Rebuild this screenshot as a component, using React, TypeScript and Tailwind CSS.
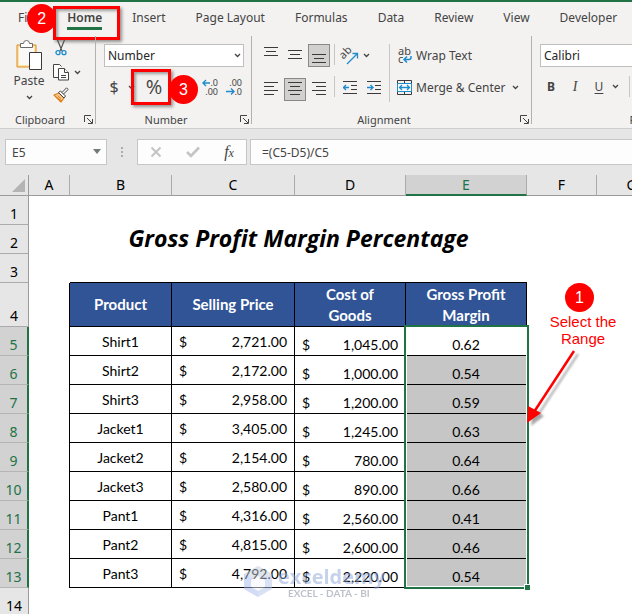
import type { ReactNode } from 'react';
import clsx from 'clsx';

const TABS = ['File', 'Home', 'Insert', 'Page Layout', 'Formulas', 'Data', 'Review', 'View', 'Developer'];

const COLUMNS = ['A', 'B', 'C', 'D', 'E', 'F', 'G'];

const PRODUCTS = [
  { name: 'Shirt1', price: '2,721.00', cost: '1,045.00', margin: '0.62' },
  { name: 'Shirt2', price: '2,172.00', cost: '1,000.00', margin: '0.54' },
  { name: 'Shirt3', price: '2,958.00', cost: '1,200.00', margin: '0.59' },
  { name: 'Jacket1', price: '3,405.00', cost: '1,245.00', margin: '0.63' },
  { name: 'Jacket2', price: '2,154.00', cost: '780.00', margin: '0.64' },
  { name: 'Jacket3', price: '2,580.00', cost: '890.00', margin: '0.66' },
  { name: 'Pant1', price: '4,316.00', cost: '2,560.00', margin: '0.41' },
  { name: 'Pant2', price: '4,815.00', cost: '2,600.00', margin: '0.46' },
  { name: 'Pant3', price: '4,792.00', cost: '2,220.00', margin: '0.54' },
];

export default function App() {
  return (
    <div className="flex h-screen flex-col overflow-hidden bg-white font-['Noto_Sans','Open_Sans',sans-serif] text-xs text-[#444444]">
      <header className="shrink-0 border-t-2 border-b border-t-[#217346] border-b-[#d0cecc] bg-[#f3f2f1]">
        <TabBar />
        <Ribbon />
      </header>
      <FormulaBar />
      <Sheet />
    </div>
  );
}

function TabBar() {
  return (
    <nav className="flex h-[34px] items-start gap-[30px] pt-1.5 pl-[18px]">
      {TABS.map((tab) => {
        const active = tab === 'Home';
        return (
          <button
            key={tab}
            type="button"
            className={clsx('relative shrink-0 leading-5 whitespace-nowrap', active && 'font-semibold')}
          >
            {tab}
            {active && (
              <>
                <span className="absolute inset-x-0 top-[19px] h-[3px] bg-[#217346]" />
                <Highlight className="-top-0.5 -right-[18px] -left-3.5 h-[34px]" />
                <Step n={2} className="-top-1 -left-10" />
              </>
            )}
          </button>
        );
      })}
    </nav>
  );
}

function Ribbon() {
  return (
    <div className="flex h-[92px] overflow-x-clip">
      <Group label="Clipboard" className="w-24" labelClass="pr-4">
        <div className="flex gap-1 pt-1 pl-3">
          <button type="button" className="flex w-[34px] flex-col items-center">
            <PasteIcon />
            <span className="leading-5">Paste</span>
            <Chevron className="mt-1" />
          </button>
          <div className="flex flex-col">
            <button type="button" aria-label="Cut" className="flex h-[21px] w-[22px] justify-center">
              <CutIcon />
            </button>
            <button type="button" aria-label="Copy" className="flex h-[23px] items-center">
              <CopyIcon />
              <Chevron className="ml-1" />
            </button>
            <button type="button" aria-label="Format Painter" className="flex h-[22px] w-[22px] items-center justify-center">
              <BrushIcon />
            </button>
          </div>
        </div>
      </Group>

      <Group label="Number" className="w-[156px]" labelClass="pr-4">
        <div className="flex flex-col gap-2 px-2 pt-2">
          <Combo label="Number format" value="Number" />
          <div className="flex h-6 items-center">
            <button type="button" aria-label="Accounting format" className="w-5 text-base leading-6">
              $
            </button>
            <Chevron className="-mr-1 ml-1" />
            <button
              type="button"
              aria-label="Percent style"
              className="relative w-10 pl-1.5 font-['Open_Sans',sans-serif] text-xl leading-6"
            >
              %
              <Highlight className="-top-1.5 right-0 -bottom-1.5 left-0" />
              <Step n={3} className="top-0 left-[38px]" />
            </button>
            <span className="flex-1" />
            <button type="button" aria-label="Increase decimal" className="mr-2">
              <DecimalIcon increase />
            </button>
            <button type="button" aria-label="Decrease decimal" className="mr-0.5">
              <DecimalIcon />
            </button>
          </div>
        </div>
      </Group>

      <Group label="Alignment" className="w-[280px]" labelClass="pr-4">
        <div className="flex pt-2 pl-2">
          <div className="grid grid-cols-3 gap-x-0.5 gap-y-[9px]">
            <AlignButton label="Top align" y={3} widths={[14, 10, 14]} side="center" />
            <AlignButton label="Middle align" y={6} widths={[14, 10, 14]} side="center" />
            <AlignButton label="Bottom align" y={10} widths={[14, 10, 14]} side="center" pressed />
            <AlignButton label="Align left" y={4} widths={[14, 10, 14, 10]} side="left" />
            <AlignButton label="Center" y={4} widths={[14, 10, 14, 10]} side="center" pressed />
            <AlignButton label="Align right" y={4} widths={[14, 10, 14, 10]} side="right" />
          </div>
          <div className="mx-1 flex flex-col gap-[11px]">
            <span className="h-[21px] w-px bg-[#c8c6c4]" />
            <span className="h-[21px] w-px bg-[#c8c6c4]" />
          </div>
          <div className="flex flex-col gap-[9px]">
            <button type="button" aria-label="Orientation" className="flex h-[23px] items-center pl-0.5">
              <OrientationIcon />
              <Chevron className="ml-1" />
            </button>
            <div className="flex gap-0.5">
              <button type="button" aria-label="Decrease indent" className="flex h-[23px] w-[22px] items-center justify-center">
                <IndentIcon />
              </button>
              <button type="button" aria-label="Increase indent" className="flex h-[23px] w-[22px] items-center justify-center">
                <IndentIcon increase />
              </button>
            </div>
          </div>
          <span className="mr-[7px] ml-1 h-[58px] w-px bg-[#c8c6c4]" />
          <div className="flex flex-col items-start gap-[9px]">
            <button type="button" className="flex h-[23px] items-center gap-1 whitespace-nowrap">
              <WrapIcon />
              Wrap Text
            </button>
            <button type="button" className="flex h-[23px] items-center gap-1 whitespace-nowrap">
              <MergeIcon />
              Merge &amp; Center
              <Chevron className="ml-0.5" />
            </button>
          </div>
        </div>
      </Group>

      <Group label="Font" className="w-[218px]">
        <div className="flex flex-col gap-2 px-2 pt-2">
          <Combo label="Font name" value="Calibri" />
          <div className="flex h-[23px] items-center gap-0.5">
            <button type="button" aria-label="Bold" className="w-[22px] font-bold">
              B
            </button>
            <button type="button" aria-label="Italic" className="w-[22px] font-['Liberation_Serif',serif] text-sm italic">
              I
            </button>
            <button type="button" aria-label="Underline" className="w-[22px] underline underline-offset-2">
              U
            </button>
            <Chevron />
            <span className="ml-2 h-[21px] w-px bg-[#c8c6c4]" />
          </div>
        </div>
      </Group>
    </div>
  );
}

function Group({
  label,
  className,
  labelClass,
  children,
}: {
  label: string;
  className: string;
  labelClass?: string;
  children: ReactNode;
}) {
  return (
    <section aria-label={label} className={clsx('relative flex shrink-0 flex-col justify-between pb-0.5', className)}>
      {children}
      <div className={clsx('text-center text-[11px] leading-3', labelClass)}>{label}</div>
      <button type="button" aria-label={`${label} settings`} className="absolute right-[3px] bottom-1">
        <LauncherIcon />
      </button>
      <span className="absolute top-0 right-0 bottom-1 w-px bg-[#b3b0ad]" />
    </section>
  );
}

function Combo({ label, value }: { label: string; value: string }) {
  return (
    <div className="relative">
      <select
        aria-label={label}
        defaultValue={value}
        className="block h-[23px] w-full appearance-none border border-[#c1bfbd] bg-white pl-[3px] text-xs text-[#262626]"
      >
        <option>{value}</option>
      </select>
      <Chevron className="pointer-events-none absolute top-[9px] right-[3px]" />
    </div>
  );
}

function AlignButton({
  label,
  y,
  widths,
  side,
  pressed = false,
}: {
  label: string;
  y: number;
  widths: number[];
  side: 'left' | 'center' | 'right';
  pressed?: boolean;
}) {
  return (
    <button
      type="button"
      aria-label={label}
      aria-pressed={pressed}
      className={clsx(
        'flex h-[23px] w-[22px] items-center justify-center border',
        pressed ? 'border-[#8a8886] bg-[#d2d0ce]' : 'border-transparent',
      )}
    >
      <svg width="14" height="19" viewBox="0 0 14 19" fill="#3b3a39" shapeRendering="crispEdges">
        {widths.map((w, i) => (
          <rect
            key={i}
            x={side === 'left' ? 0 : side === 'right' ? 14 - w : (14 - w) / 2}
            y={y - 2 + i * 4}
            width={w}
            height="1"
          />
        ))}
      </svg>
    </button>
  );
}

function FormulaBar() {
  return (
    <div className="flex h-[46px] shrink-0 items-start bg-[#e6e6e6] pt-[10px] pl-[5px]">
      <div className="relative w-[102px] shrink-0">
        <input
          aria-label="Name box"
          defaultValue="E5"
          className="block h-[26px] w-full border border-[#c6c6c6] bg-[#fdfdfd] pl-1.5 text-xs"
        />
        <svg className="absolute top-2.5 right-1.5" width="8" height="5" viewBox="0 0 8 5" fill="#71797b">
          <path d="M0 0h8L4 5z" />
        </svg>
      </div>
      <svg className="h-[26px] w-[30px] shrink-0" viewBox="0 0 30 26" fill="#ababab">
        <path d="M14 8h2v2h-2zM14 12h2v2h-2zM14 16h2v2h-2z" />
      </svg>
      <div className="mr-[3px] flex h-[26px] w-[110px] shrink-0 items-center justify-around border border-[#c6c6c6] bg-[#fdfdfd]">
        <button type="button" aria-label="Cancel">
          <svg width="12" height="12" viewBox="0 0 12 12" fill="none" stroke="#c4c4c4" strokeWidth="2">
            <path d="M1.5 1.5l9 9M10.5 1.5l-9 9" />
          </svg>
        </button>
        <button type="button" aria-label="Enter">
          <svg width="14" height="12" viewBox="0 0 14 12" fill="none" stroke="#c4c4c4" strokeWidth="2.6">
            <path d="M1 6l4 4L13 1.5" />
          </svg>
        </button>
        <button type="button" aria-label="Insert function" className="font-['Liberation_Serif',serif] text-base leading-5 text-[#444444] italic">
          f<span className="text-xs">x</span>
        </button>
      </div>
      <input
        aria-label="Formula"
        defaultValue="=(C5-D5)/C5"
        className="block h-[26px] min-w-0 flex-1 border border-r-0 border-[#c6c6c6] bg-[#fdfdfd] pl-[11px] text-xs"
      />
    </div>
  );
}

function Sheet() {
  return (
    <main className="relative min-h-0 flex-1 overflow-hidden">
      <table className="w-full min-w-[667px] table-fixed border-separate border-spacing-0 font-['Lato',sans-serif] text-sm text-black">
        <colgroup>
          <col className="w-[29px]" />
          <col className="w-[41px]" />
          <col className="w-[102px]" />
          <col className="w-[123px]" />
          <col className="w-[111px]" />
          <col className="w-[121px]" />
          <col className="w-[70px]" />
          <col />
        </colgroup>
        <thead className="font-['Noto_Sans','Open_Sans',sans-serif]">
          <tr className="h-[21px]">
            <th className="border-r border-b border-[#9b9b9b] bg-[#e6e6e6] p-0">
              <svg className="ml-3" width="13" height="13" viewBox="0 0 13 13" fill="#b4b4b4">
                <path d="M13 0v13H0z" />
              </svg>
            </th>
            {COLUMNS.map((c) => (
              <th
                key={c}
                scope="col"
                className={clsx(
                  'border-r p-0 text-sm font-normal',
                  c === 'E'
                    ? 'border-b-2 border-r-[#ababab] border-b-[#217346] bg-[#d2d2d2] pt-px leading-[18px] text-[#217346]'
                    : 'border-b border-r-[#ababab] border-b-[#9b9b9b] bg-[#e6e6e6] leading-5',
                )}
              >
                {c}
              </th>
            ))}
          </tr>
        </thead>
        <tbody>
          <tr className="h-[29px]">
            <RowHead n={1} />
            <td colSpan={7} />
          </tr>
          <tr className="h-[29px]">
            <RowHead n={2} />
            <td />
            <td
              colSpan={4}
              className="p-0 pb-1 text-center font-['Open_Sans',sans-serif] text-[23px] leading-6 font-bold whitespace-nowrap italic"
            >
              Gross Profit Margin Percentage
            </td>
            <td colSpan={2} />
          </tr>
          <tr className="h-[29px]">
            <RowHead n={3} />
            <td />
            <td colSpan={4} className="border-b border-black p-0" />
            <td colSpan={2} />
          </tr>
          <tr className="h-11">
            <RowHead n={4} />
            <td className="border-r border-black p-0" />
            <HeadCell>Product</HeadCell>
            <HeadCell>Selling Price</HeadCell>
            <HeadCell>
              Cost of
              <br />
              Goods
            </HeadCell>
            <HeadCell>
              Gross Profit
              <br />
              Margin
            </HeadCell>
            <td colSpan={2} />
          </tr>
          {PRODUCTS.map((p, i) => (
            <tr key={p.name} className="h-[29px]">
              <RowHead n={i + 5} selected />
              <td className="border-r border-black p-0" />
              <td className="border-r border-b border-black p-0 pt-0.5 text-center leading-5">{p.name}</td>
              <td className="border-r border-b border-black px-[7px] pt-0.5 pb-0 leading-5">
                <Money value={p.price} />
              </td>
              <td className="border-r border-b border-black px-[7px] py-0 align-bottom leading-5">
                <Money value={p.cost} />
              </td>
              <td
                className={clsx(
                  'relative border-r border-b border-black p-0 text-center align-bottom leading-5',
                  i > 0 && 'bg-[#c6c6c6]',
                )}
              >
                {p.margin}
                {i === 0 && <Selection />}
              </td>
              <td colSpan={2} />
            </tr>
          ))}
          <tr className="h-[29px]">
            <RowHead n={14} />
            <td colSpan={7} />
          </tr>
        </tbody>
      </table>
      <Callout />
      <Watermark />
    </main>
  );
}

function RowHead({ n, selected = false }: { n: number; selected?: boolean }) {
  return (
    <th
      scope="row"
      className={clsx(
        "border-b p-0 text-center align-bottom font-['Noto_Sans','Open_Sans',sans-serif] text-sm leading-5 font-normal",
        selected
          ? 'border-r-2 border-r-[#217346] border-b-[#b5b5b5] bg-[#d2d2d2] text-[#217346]'
          : 'border-r border-r-[#9b9b9b] border-b-[#ababab] bg-[#e6e6e6]',
      )}
    >
      {n}
    </th>
  );
}

function HeadCell({ children }: { children: ReactNode }) {
  return (
    <th
      scope="col"
      className="border-r border-b border-black bg-[#305496] p-0 text-[15px] leading-[21px] font-bold text-white"
    >
      {children}
    </th>
  );
}

function Money({ value }: { value: string }) {
  return (
    <div className="flex justify-between">
      <span>$</span>
      <span>{value}</span>
    </div>
  );
}

// Outline of the selected range E5:E13, anchored in its first cell
function Selection() {
  return (
    <span className="pointer-events-none absolute -top-0.5 -right-[3px] -left-0.5 z-10 h-[264px] border-2 border-[#217346]">
      <span className="absolute inset-0 border border-white" />
      <span className="absolute -right-[4px] -bottom-[4px] size-[7px] border border-white bg-[#217346]" />
    </span>
  );
}

function Highlight({ className }: { className: string }) {
  return (
    <span
      className={clsx(
        'pointer-events-none absolute border-3 border-[#ff0000] shadow-[2px_2px_3px_rgba(0,0,0,0.4),inset_2px_2px_3px_rgba(0,0,0,0.35)]',
        className,
      )}
    />
  );
}

function Step({ n, className }: { n: number; className: string }) {
  return (
    <span
      className={clsx(
        "absolute z-10 flex size-[29px] items-center justify-center rounded-full bg-[#ff0000] font-['Liberation_Sans',sans-serif] text-base leading-none font-normal text-white",
        className,
      )}
    >
      {n}
    </span>
  );
}

function Callout() {
  return (
    <div className="absolute top-[108px] left-[524px] z-20 w-[118px] text-center font-['Liberation_Sans',sans-serif] text-[15px] leading-[17px] text-[#ff0000]">
      <Step n={1} className="top-0 left-[41px]" />
      <p className="pt-[30px]">
        Select the
        <br />
        Range
      </p>
      <svg className="overflow-visible" width="60" height="80" viewBox="0 0 60 80">
        <g opacity="0.35" transform="translate(4 3)" fill="#000000" stroke="#000000" className="blur-[1px]">
          <path d="M50 4L10 65" strokeWidth="2" />
          <path d="M3 76L5 59L16 66z" stroke="none" />
        </g>
        <path d="M50 4L10 65" stroke="#ff0000" strokeWidth="2.5" />
        <path d="M3 76L4 59L17 66z" fill="#ff0000" />
      </svg>
    </div>
  );
}

function Watermark() {
  return (
    <div className="pointer-events-none absolute top-[391px] left-[244px] flex items-start gap-1.5 text-[#8fa6d8] opacity-50">
      <svg width="28" height="31" viewBox="0 0 28 31">
        <path d="M14 0l14 8v15l-14 8L0 23V8z" fill="#b4c4ea" />
        <path d="M14 0l14 8-14 7L0 8z" fill="#c3cbd8" />
        <path d="M0 8l14 7v16L0 23z" fill="#a7bbee" />
        <path d="M14 10l7 4v7l-7 4-7-4v-7z" fill="#f3f6fc" />
      </svg>
      <div className="font-['Open_Sans',sans-serif] font-bold">
        <div className="text-xl leading-[22px]">exceldemy</div>
        <div className="pl-2.5 font-['Lato',sans-serif] text-[10px] leading-[10px] whitespace-nowrap text-[#7b8393]">
          EXCEL - DATA - BI
        </div>
      </div>
    </div>
  );
}

function Chevron({ className }: { className?: string }) {
  return (
    <svg className={clsx('shrink-0', className)} width="7" height="5" viewBox="0 0 7 5" fill="none" stroke="#444444" strokeWidth="1.3">
      <path d="M1 1l2.5 2.5L6 1" />
    </svg>
  );
}

function LauncherIcon() {
  return (
    <svg width="9" height="9" viewBox="0 0 9 9" fill="none" stroke="#444444">
      <path d="M.5 7V.5H7M3 3l5 5M8.5 4v4.5H4" />
    </svg>
  );
}

function PasteIcon() {
  return (
    <svg width="28" height="31" viewBox="0 0 28 31" fill="none">
      <path d="M2 5h19v22H2z" fill="#fce3a6" stroke="#e08a1e" />
      <path d="M4 7h15v18H4z" fill="#faf9f8" />
      <path d="M5.5 7.5v-4h3a3 3 0 0 1 6 0h3v4z" fill="#ffffff" stroke="#6b6a69" />
      <path d="M14.5 12.5h12v17h-12z" fill="#ffffff" stroke="#3b3a39" />
    </svg>
  );
}

function CutIcon() {
  return (
    <svg width="12" height="16" viewBox="0 0 12 16" fill="none">
      <path d="M2.5 0l4.5 11M9.5 0L5 11" stroke="#555453" strokeWidth="1.2" />
      <circle cx="3" cy="12.7" r="2" stroke="#1e8bcd" strokeWidth="1.3" />
      <circle cx="9" cy="12.7" r="2" stroke="#1e8bcd" strokeWidth="1.3" />
    </svg>
  );
}

function CopyIcon() {
  return (
    <svg className="ml-[3px]" width="17" height="17" viewBox="0 0 17 17" fill="#fdfdfd" stroke="#444444">
      <path d="M5.5 13.5h-5V.5h6l2 2" />
      <path d="M5.5 4.5h6l4 4v7.5h-10z" />
      <path d="M11.5 4.5v4h4M8 11.5h5M8 13.5h5" />
    </svg>
  );
}

function BrushIcon() {
  return (
    <svg width="16" height="16" viewBox="0 0 16 16" strokeLinejoin="round">
      <path d="M1 8l5-2 5 5-3 4z" fill="#f9d39b" stroke="#e07a10" strokeWidth="1.2" />
      <path d="M3 10l6 4M4.5 8.5l4 3.5" stroke="#e07a10" strokeWidth="1" />
      <path d="M5.5 5.5l2-1.5 5 5-1.5 2z" fill="#ffffff" stroke="#444444" />
      <path d="M9 5.5L13.5.8l1.7 1.7-4.7 4.5z" fill="#ffffff" stroke="#444444" />
    </svg>
  );
}

function DecimalIcon({ increase = false }: { increase?: boolean }) {
  return (
    <svg
      width="16"
      height="17"
      viewBox="0 0 16 17"
      className="overflow-visible font-['Noto_Sans',sans-serif] text-[9px]"
      fill="#444444"
    >
      <text x="16" y="7" textAnchor="end">
        {increase ? '.0' : '.00'}
      </text>
      <text x="16" y="16" textAnchor="end">
        {increase ? '.00' : '.0'}
      </text>
      <path
        d={increase ? 'M8 4H1M4 1L1 4l3 3' : 'M0 12.5h8M5 9.5l3 3-3 3'}
        fill="none"
        stroke="#1e8bcd"
        strokeWidth="1.4"
      />
    </svg>
  );
}

function IndentIcon({ increase = false }: { increase?: boolean }) {
  return (
    <svg width="14" height="14" viewBox="0 0 14 14" fill="none">
      <path d="M0 .5h14M8 4.5h6M8 8.5h6M0 12.5h14" stroke="#3b3a39" />
      <path
        d={increase ? 'M0 6.5h6M3.5 4l2.5 2.5L3.5 9' : 'M6 6.5H0M3 4L.5 6.5 3 9'}
        stroke="#1e8bcd"
        strokeWidth="1.4"
      />
    </svg>
  );
}

function OrientationIcon() {
  return (
    <svg width="18" height="18" viewBox="0 0 18 18" fill="none" className="overflow-visible">
      <text
        x="2"
        y="12"
        transform="rotate(-45 3 12)"
        className="font-['Noto_Sans',sans-serif] text-[11px]"
        fill="#444444"
      >
        ab
      </text>
      <path d="M6 17L16 7M11.5 6.5H16.5V11.5" stroke="#1e8bcd" strokeWidth="1.3" />
    </svg>
  );
}

function WrapIcon() {
  return (
    <svg width="15" height="17" viewBox="0 0 15 17" className="overflow-visible font-['Noto_Sans',sans-serif] text-[11px]">
      <text x="1" y="8" fill="#444444">
        ab
      </text>
      <text x="1" y="16" fill="#444444">
        c
      </text>
      <path d="M14 9v1.5a2 2 0 0 1-2 2H7.5M10 9.5l-3 3 3 3" fill="none" stroke="#1e8bcd" strokeWidth="1.5" />
    </svg>
  );
}

function MergeIcon() {
  return (
    <svg width="15" height="15" viewBox="0 0 15 15" fill="none">
      <path d="M.5.5h14v14H.5zM7.5.5v3M7.5 11.5v3" stroke="#3b3a39" />
      <path d="M.5 3.5h14v8H.5z" fill="#ffffff" stroke="#1e8bcd" />
      <path d="M2.5 7.5h10M5 5L2.5 7.5 5 10M10 5l2.5 2.5L10 10" stroke="#1e8bcd" strokeWidth="1.3" />
    </svg>
  );
}
